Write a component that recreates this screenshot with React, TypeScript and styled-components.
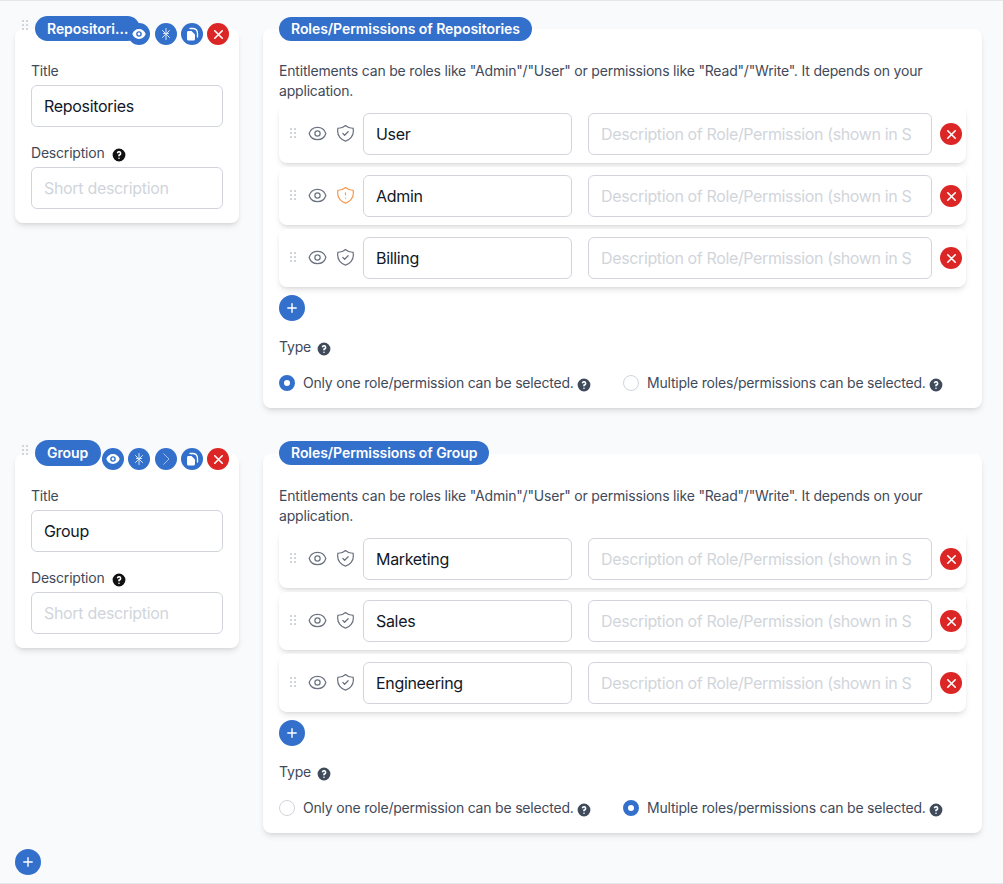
import React from "react";
import styled, { createGlobalStyle } from "styled-components";
import {
  HiEye,
  HiOutlineEye,
  HiOutlineShieldCheck,
  HiOutlineShieldExclamation,
  HiQuestionMarkCircle,
  HiOutlineChevronRight,
  HiOutlineX,
  HiPlus,
} from "react-icons/hi";

const Global = createGlobalStyle`
  html, body { margin: 0; padding: 0; background: #f9fafb; }
  body { font-family: Inter, "Liberation Sans", sans-serif; }
  * { box-sizing: border-box; }
`;

const Page = styled.div`
  width: 1003px;
  height: 884px;
  overflow: hidden;
  background: #f9fafb;
  border-top: 1px solid #e5e7eb;
  border-bottom: 1px solid #e5e7eb;
  padding: 28px 21px 0 15px;
  display: flex;
  flex-direction: column;
`;

const Block = styled.section<{ $gap: number }>`
  flex: none;
  display: grid;
  grid-template-columns: 224px 719px;
  column-gap: 24px;
  align-items: start;
  margin-bottom: ${(p) => p.$gap}px;
`;

const Card = styled.div`
  position: relative;
  background: #fff;
  border-radius: 8px;
  box-shadow: 0 4px 6px -1px rgba(0, 0, 0, 0.1), 0 2px 4px -2px rgba(0, 0, 0, 0.1);
`;

const SideCard = styled(Card)`
  height: 194px;
  padding: 32px 16px 0;
`;

const MainCard = styled(Card)`
  height: 379px;
  padding: 32px 16px 0;
`;

const Pill = styled.div<{ $width?: number; $top: number; $height: number }>`
  position: absolute;
  left: 20px;
  top: ${(p) => p.$top}px;
  height: ${(p) => p.$height}px;
  width: ${(p) => (p.$width ? `${p.$width}px` : "auto")};
  padding: 0 11px 0 12px;
  border-radius: 13px;
  background: #3370cc;
  color: #fff;
  font-size: 14px;
  font-weight: 600;
  letter-spacing: -0.06px;
  line-height: ${(p) => p.$height}px;
  white-space: nowrap;
  overflow: hidden;
  text-overflow: ellipsis;
`;

const MainPill = styled(Pill)`
  left: 16px;
  padding: 0 12px;
`;

const Grip = styled.svg`
  display: block;
  flex: none;
  width: 6px;
  height: 10px;
  fill: #cbd0d6;
`;

const SideGrip = styled.div`
  position: absolute;
  left: 7px;
  top: -9px;
`;

const Actions = styled.div`
  position: absolute;
  right: 10px;
  top: -6px;
  display: flex;
  gap: 4.2px;
`;

const RoundButton = styled.button<{ $red?: boolean; $size?: number }>`
  flex: none;
  width: ${(p) => p.$size ?? 22}px;
  height: ${(p) => p.$size ?? 22}px;
  padding: 0;
  border: none;
  border-radius: 50%;
  display: flex;
  align-items: center;
  justify-content: center;
  color: #fff;
  background: ${(p) => (p.$red ? "#dc2626" : "#3370cc")};
`;

const FieldLabel = styled.label`
  display: flex;
  align-items: center;
  gap: 6px;
  height: 20px;
  color: #3f4a5a;
  font-size: 14px;
  letter-spacing: -0.2px;
  line-height: 20px;
`;

const HelpBlack = styled(HiQuestionMarkCircle)`
  flex: none;
  color: #111;
  margin-top: 3px;
`;

const HelpGray = styled(HiQuestionMarkCircle)`
  flex: none;
  color: #3f4a5a;
  margin-top: 3px;
`;

const TextInput = styled.input`
  display: block;
  width: 100%;
  height: 42px;
  padding: 0 12px;
  border: 1px solid #d1d5db;
  border-radius: 6px;
  background: #fff;
  color: #111827;
  font-family: inherit;
  font-size: 16px;
  letter-spacing: -0.32px;
  outline: none;
  &::placeholder { color: #d1d5db; opacity: 1; }
`;

const SideInput = styled(TextInput)`
  margin: 4px 0 16px;
`;

const Note = styled.p`
  margin: 0;
  height: 44px;
  color: #3f4a5a;
  font-size: 14px;
  letter-spacing: -0.19px;
  line-height: 20px;
`;

const Rows = styled.div`
  display: flex;
  flex-direction: column;
  gap: 4px;
`;

const Row = styled.div`
  display: flex;
  align-items: center;
  height: 58px;
  padding: 0 4px 0 11px;
  background: #fff;
  border-radius: 8px;
  box-shadow: 0 4px 6px -1px rgba(0, 0, 0, 0.1), 0 2px 4px -2px rgba(0, 0, 0, 0.1);
`;

const RowGrip = styled.div`
  width: 16.5px;
  flex: none;
  margin-top: -3px;
`;

const RowIcons = styled.div`
  display: flex;
  align-items: center;
  gap: 7px;
  width: 56.5px;
  flex: none;
  color: #6b7280;
  margin-top: -1px;
`;

const RoleInput = styled(TextInput)`
  width: 209px;
  flex: none;
  margin-right: 16px;
`;

const DescInput = styled(TextInput)`
  width: 344px;
  flex: none;
  margin-right: 8px;
  letter-spacing: -0.37px;
`;

const AddRow = styled.div`
  margin-top: 8px;
`;

const TypeLabel = styled(FieldLabel)`
  margin-top: 16px;
  gap: 5px;
`;

const RadioGrid = styled.div`
  display: grid;
  grid-template-columns: 344px 1fr;
  margin-top: 16px;
`;

const RadioOption = styled.div`
  display: flex;
  align-items: center;
  gap: 8px;
  height: 20px;
  color: #3f4a5a;
  font-size: 14px;
  letter-spacing: -0.2px;
  line-height: 20px;
`;

const RadioDot = styled.span<{ $on?: boolean }>`
  flex: none;
  width: 16px;
  height: 16px;
  border-radius: 50%;
  background: #fff;
  border: ${(p) => (p.$on ? "5px solid #3370cc" : "1px solid #d1d5db")};
`;

const RadioHelp = styled.span`
  display: flex;
  margin-left: -6px;
  margin-top: 1px;
`;

const DragDots = () => (
  <Grip viewBox="0 0 6 10">
    {[0, 4].flatMap((x) =>
      [0, 4, 8].map((y) => <rect key={`${x}-${y}`} x={x} y={y} width="2" height="2" rx="0.4" />)
    )}
  </Grip>
);

const FragmentIcon = () => (
  <svg width="14" height="14" viewBox="0 0 14 14" fill="none" stroke="#dbe6f7" strokeWidth="1" strokeLinecap="round">
    <path d="M7 1.5v11" />
    <path d="M3.5 3.5l7 7" />
    <path d="M10.5 3.5l-7 7" />
    <path d="M4.5 6.5h5" />
  </svg>
);

const CopyIcon = () => (
  <svg width="16" height="16" viewBox="0 0 16 16" fill="none">
    <path d="M6 2.5h2.5c3 0 5 2 5 5V11" stroke="#fff" strokeWidth="1.3" strokeLinecap="round" />
    <path d="M3 6.5C3 5.7 3.6 5 4.5 5H7.5L11 8.5V13c0 .8-.6 1.5-1.5 1.5h-5C3.6 14.5 3 13.8 3 13Z" fill="#fff" />
  </svg>
);

const RoleRow = ({ name, warn }: { name: string; warn?: boolean }) => (
  <Row>
    <RowGrip>
      <DragDots />
    </RowGrip>
    <RowIcons>
      <HiOutlineEye size={21} strokeWidth={1.4} />
      {warn ? (
        <HiOutlineShieldExclamation size={21} strokeWidth={1.4} color="#f79a55" />
      ) : (
        <HiOutlineShieldCheck size={21} strokeWidth={1.4} />
      )}
    </RowIcons>
    <RoleInput defaultValue={name} />
    <DescInput placeholder="Description of Role/Permission (shown in S" />
    <RoundButton $red>
      <HiOutlineX size={15} strokeWidth={2.6} />
    </RoundButton>
  </Row>
);

const AddButton = () => (
  <RoundButton $size={26}>
    <HiPlus size={14} />
  </RoundButton>
);

type Props = {
  title: string;
  pillWidth: number;
  top: number;
  height: number;
  mainTop: number;
  gap: number;
  roles: { name: string; warn?: boolean }[];
  first: boolean;
  chevron?: boolean;
};

const Resource = ({ title, pillWidth, top, height, mainTop, gap, roles, first, chevron }: Props) => (
  <Block $gap={gap}>
    <SideCard>
      <SideGrip>
        <DragDots />
      </SideGrip>
      <Pill $width={pillWidth} $top={top} $height={height}>
        {title}
      </Pill>
      <Actions>
        <RoundButton>
          <HiEye size={14} />
        </RoundButton>
        <RoundButton>
          <FragmentIcon />
        </RoundButton>
        {chevron && (
          <RoundButton>
            <HiOutlineChevronRight size={18} strokeWidth={1} color="#c9daf3" />
          </RoundButton>
        )}
        <RoundButton>
          <CopyIcon />
        </RoundButton>
        <RoundButton $red>
          <HiOutlineX size={15} strokeWidth={2.6} />
        </RoundButton>
      </Actions>
      <FieldLabel>Title</FieldLabel>
      <SideInput defaultValue={title} />
      <FieldLabel>
        Description <HelpBlack size={16} />
      </FieldLabel>
      <SideInput placeholder="Short description" />
    </SideCard>
    <MainCard>
      <MainPill $top={mainTop} $height={24}>
        Roles/Permissions of {title}
      </MainPill>
      <Note>
        Entitlements can be roles like "Admin"/"User" or permissions like "Read"/"Write". It depends on your application.
      </Note>
      <Rows>
        {roles.map((r) => (
          <RoleRow key={r.name} name={r.name} warn={r.warn} />
        ))}
      </Rows>
      <AddRow>
        <AddButton />
      </AddRow>
      <TypeLabel>
        Type <HelpGray size={16} />
      </TypeLabel>
      <RadioGrid>
        <RadioOption>
          <RadioDot $on={first} />
          Only one role/permission can be selected.
          <RadioHelp>
            <HelpGray size={16} />
          </RadioHelp>
        </RadioOption>
        <RadioOption>
          <RadioDot $on={!first} />
          Multiple roles/permissions can be selected.
          <RadioHelp>
            <HelpGray size={16} />
          </RadioHelp>
        </RadioOption>
      </RadioGrid>
    </MainCard>
  </Block>
);

export default function App() {
  return (
    <Page>
      <Global />
      <Resource
        title="Repositories"
        pillWidth={105}
        top={-13}
        height={25}
        mainTop={-12}
        gap={46}
        first
        roles={[{ name: "User" }, { name: "Admin", warn: true }, { name: "Billing" }]}
      />
      <Resource
        title="Group"
        pillWidth={66}
        top={-14}
        height={26}
        mainTop={-13}
        gap={16}
        chevron
        first={false}
        roles={[{ name: "Marketing" }, { name: "Sales" }, { name: "Engineering" }]}
      />
      <div>
        <AddButton />
      </div>
    </Page>
  );
}
